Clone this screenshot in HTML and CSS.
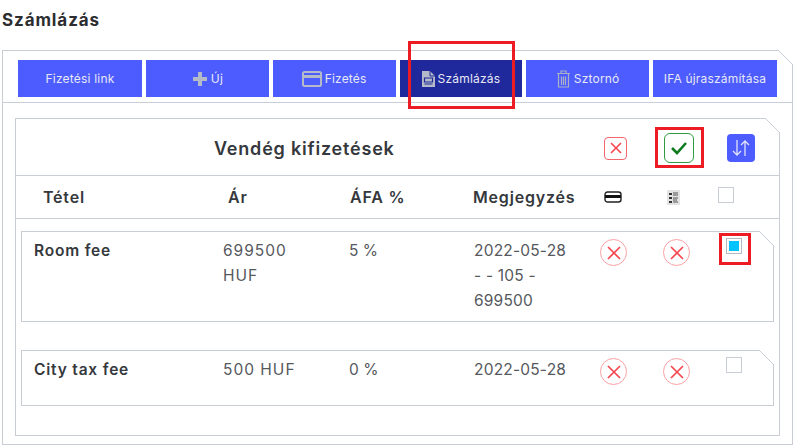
FILE: index.html
```html
<!DOCTYPE html>
<html>
<head>
  <title>Számlázás</title>
  <link rel="stylesheet" href="styles.css">
</head>
<body>
  <h1>Számlázás</h1>

  <div class="panel cut">
    <div class="toolbar">
      <button class="edge">Fizetési link</button>
      <button>
        <svg width="16" height="16" viewBox="0 0 16 16"><path d="M6 1h4v5h5v4h-5v5H6v-5H1V6h5z" fill="#b4bac8"/></svg>
        Új
      </button>
      <button>
        <svg width="20" height="16" viewBox="0 0 20 16"><rect x="1" y="1" width="18" height="14" rx="1.5" fill="none" stroke="#b4bac8" stroke-width="2"/><path d="M1 4h18v3H1z" fill="#b4bac8"/><path d="M4 11h4v1.500H4zM10 11h3v1.500h-3z" fill="#4d5cff"/></svg>
        Fizetés
      </button>
      <button class="active">
        <svg width="13" height="18" viewBox="0 0 13 18"><path d="M0 1h8l5 5v11H0z" fill="#b4bac8"/><path d="M2.500 8h8v4h-8zM2.500 14h8" fill="none" stroke="#20299b" stroke-width="1.200"/><path d="M8 1v5h5" fill="none" stroke="#20299b"/></svg>
        Számlázás
        <span class="mark mark-tab"></span>
      </button>
      <button>
        <svg width="15" height="18" viewBox="0 0 15 18"><path d="M1 3.500h13M5 3V1h5v2M2.500 4v13h10V4M5.500 6.500V15M7.500 6.500V15M9.500 6.500V15" fill="none" stroke="#aab1c4" stroke-width="1.200"/></svg>
        Sztornó
      </button>
      <button class="edge">IFA újraszámítása</button>
    </div>

    <div class="card cut">
      <div class="card-head">
        <h2>Vendég kifizetések</h2>
        <span class="btn-x">
          <svg width="14" height="14" viewBox="0 0 14 14"><path d="M2 2l10 10M12 2L2 12" stroke="#f4474f" stroke-width="1.600" fill="none"/></svg>
        </span>
        <span class="btn-ok">
          <svg width="18" height="14" viewBox="0 0 18 14"><path d="M2 7l5 5 9-10" stroke="#0f7c1f" stroke-width="2.600" fill="none"/></svg>
          <span class="mark mark-ok"></span>
        </span>
        <span class="btn-sort">
          <svg width="20" height="18" viewBox="0 0 20 18"><path d="M6 1v15M2 12l4 4 4-4M14 17V2M10 6l4-4 4 4" stroke="#dfe3ff" stroke-width="1.300" fill="none"/></svg>
        </span>
      </div>

      <div class="col-head">
        <span>Tétel</span>
        <span>Ár</span>
        <span>ÁFA %</span>
        <span>Megjegyzés</span>
        <svg class="card-icon" width="18" height="12" viewBox="0 0 18 12"><rect x="1" y="1" width="16" height="10" rx="2.500" fill="#fff" stroke="#222" stroke-width="1.400"/><path d="M1 4h16v3H1z" fill="#111"/></svg>
        <svg class="list-icon" width="13" height="15" viewBox="0 0 13 15"><rect width="13" height="15" fill="#e3e3e3"/><path d="M2 3h3v2H2zM2 7h3v2H2zM2 11h3v2H2z" fill="#333"/><path d="M6 3h5M6 5h5M6 8h5M6 10h4M6 12h5" stroke="#555"/></svg>
        <span class="check"></span>
      </div>

      <div class="row row-tall cut">
        <b>Room fee</b>
        <span class="price">699500 HUF</span>
        <span>5 %</span>
        <span class="note">2022-05-28 - - 105 - 699500</span>
        <span class="circle-x"><svg width="14" height="14" viewBox="0 0 14 14"><path d="M1 1l12 12M13 1L1 13" stroke="#f4474f" stroke-width="1.700" fill="none"/></svg></span>
        <span class="circle-x"><svg width="14" height="14" viewBox="0 0 14 14"><path d="M1 1l12 12M13 1L1 13" stroke="#f4474f" stroke-width="1.700" fill="none"/></svg></span>
        <span class="check checked"><span class="mark mark-check"></span></span>
      </div>

      <div class="row row-short cut">
        <b>City tax fee</b>
        <span class="price wide">500 HUF</span>
        <span>0 %</span>
        <span class="note">2022-05-28</span>
        <span class="circle-x"><svg width="14" height="14" viewBox="0 0 14 14"><path d="M1 1l12 12M13 1L1 13" stroke="#f4474f" stroke-width="1.700" fill="none"/></svg></span>
        <span class="circle-x"><svg width="14" height="14" viewBox="0 0 14 14"><path d="M1 1l12 12M13 1L1 13" stroke="#f4474f" stroke-width="1.700" fill="none"/></svg></span>
        <span class="check"></span>
      </div>
    </div>
  </div>
</body>
</html>
```

FILE: styles.css
```css
html, body {
  height: 446px;
  overflow: hidden;
}
body {
  margin: 0;
  padding: 0 7px 0 2px;
  font-family: 'Inter', 'Liberation Sans', sans-serif;
  background-color: #fff;
  color: #55585d;
}
h1 {
  margin: 0;
  height: 50px;
  padding-top: 9px;
  box-sizing: border-box;
  font-size: 17px;
  line-height: 22px;
  font-weight: 700;
  letter-spacing: 0.9px;
  color: #2b2d30;
}
svg {
  display: block;
}

/* clipped top right corner */
.cut {
  position: relative;
}
.cut::after {
  content: "";
  position: absolute;
  top: -1px;
  right: -1px;
  width: 15px;
  height: 15px;
  background: linear-gradient(to top right, transparent 47%, #c9ced6 47%, #c9ced6 53%, #fff 53%);
}

.panel {
  height: 395px;
  box-sizing: border-box;
  border: 1px solid #c9ced6;
}
.toolbar {
  display: flex;
  gap: 4px;
  height: 52px;
  box-sizing: border-box;
  padding: 9px 15px 0;
  border-bottom: 1px solid #c9ced6;
}
button {
  position: relative;
  display: flex;
  align-items: center;
  justify-content: center;
  gap: 3px;
  flex: 1;
  height: 37px;
  padding: 0;
  border: none;
  background-color: #4d5cff;
  color: #e6e8f5;
  font-family: inherit;
  font-size: 12px;
  letter-spacing: 0.2px;
}
button.edge {
  flex: 0 0 124px;
}
button.active {
  background-color: #20299b;
}

/* red annotation frames */
.mark {
  position: absolute;
  border: 3px solid #ed1c24;
  box-sizing: border-box;
}
.mark-tab {
  top: -19px;
  bottom: -12px;
  left: 8px;
  right: 7px;
}
.mark-ok {
  top: -7px;
  bottom: -6px;
  left: -10px;
  right: -11px;
}
.mark-check {
  top: -6px;
  bottom: -12px;
  left: -8px;
  right: -10px;
}

.card {
  margin: 15px 12px 0;
  height: 318px;
  box-sizing: border-box;
  border: 1px solid #c9ced6;
}
.card-head {
  display: flex;
  align-items: center;
  height: 54px;
  padding: 2px 0 0 198px;
  border-bottom: 1px solid #c9ced6;
}
h2 {
  margin: 0;
  width: 390px;
  font-size: 18px;
  font-weight: 600;
  letter-spacing: 0.8px;
  color: #35383c;
}
.btn-x, .btn-ok, .btn-sort {
  position: relative;
  display: flex;
  align-items: center;
  justify-content: center;
  box-sizing: border-box;
}
.btn-x {
  width: 23px;
  height: 23px;
  border: 1.500px solid #f4656c;
  border-radius: 4px;
}
.btn-ok {
  width: 30px;
  height: 30px;
  margin-left: 37px;
  border: 1.500px solid #2f9a3e;
  border-radius: 6px;
}
.btn-sort {
  width: 28px;
  height: 28px;
  margin-left: 33px;
  background-color: #4d5cff;
  border-radius: 4px;
}

.col-head, .row {
  display: grid;
  font-size: 15.500px;
  line-height: 25px;
}
.col-head {
  grid-template-columns: 185px 122px 123px 131px 63px 51px 16px;
  align-items: center;
  height: 43px;
  padding-left: 27px;
  box-sizing: border-box;
  border-bottom: 1px solid #c9ced6;
  font-size: 16px;
  font-weight: 600;
  letter-spacing: 0.8px;
  color: #35383c;
}
.col-head .check {
  margin-top: -4px;
}
.row {
  grid-template-columns: 189px 126px 125px 126px 63px 63px 16px;
  align-items: start;
  margin: 12px 5px 0;
  padding: 6px 0 0 12px;
  box-sizing: border-box;
  border: 1px solid #c9ced6;
}
.row-tall {
  height: 91px;
}
.row-short {
  height: 56px;
  margin-top: 28px;
}
.row b {
  font-weight: 600;
  letter-spacing: 0.8px;
  color: #35383c;
}
.price {
  padding-right: 30px;
  letter-spacing: 1px;
}
.price.wide {
  padding-right: 0;
}
.note {
  padding-right: 28px;
  letter-spacing: 0.2px;
}
.circle-x {
  display: flex;
  align-items: center;
  justify-content: center;
  width: 27px;
  height: 27px;
  margin-top: 1px;
  box-sizing: border-box;
  border: 1.500px solid #f9a0a4;
  border-radius: 50%;
}
.check {
  position: relative;
  display: block;
  width: 16px;
  height: 16px;
  box-sizing: border-box;
  border: 1px solid #c9ced6;
  background-color: #fff;
}
.checked {
  border-color: #b5b9c0;
}
.checked::before {
  content: "";
  display: block;
  width: 10px;
  height: 10px;
  margin: 2px;
  background-color: #00c3ff;
}
```
